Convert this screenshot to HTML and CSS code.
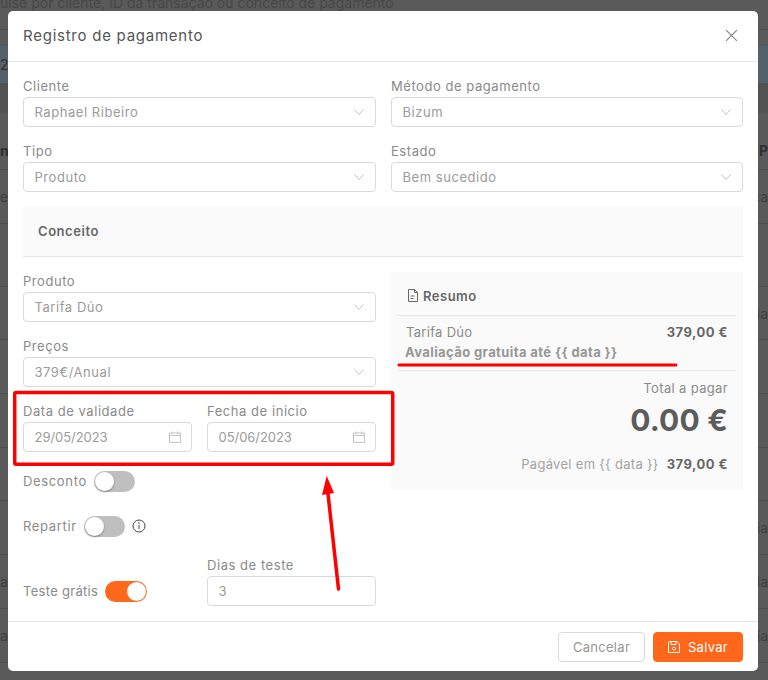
FILE: index.html
```html
<!DOCTYPE html>
<html lang="pt">
<head>
<meta charset="utf-8">
<title>Registro de pagamento</title>
<link rel="stylesheet" href="styles.css">
</head>
<body>
<svg width="0" height="0" class="defs">
  <symbol id="chev" viewBox="0 0 10 6"><path d="M.5.5 5 5.500 9.500.5" fill="none" stroke="currentColor"/></symbol>
  <symbol id="cal" viewBox="0 0 12 12"><path d="M.5 2h11v9.500H.5zM.5 4.500h11M3 .5V3M9 .5V3" fill="none" stroke="currentColor"/></symbol>
</svg>
<div class="backdrop">
  <div class="bg-search"><span>uise por cliente, ID da transação ou conceito de pagamento</span></div>
  <div class="bg-tabs"></div>
  <div class="bg-band"><span>2</span></div>
  <div class="bg-gap"></div>
  <div class="bg-head"><b>ne</b><b>P</b></div>
  <div class="bg-row"><span>ex</span><span>ca</span></div>
  <div class="bg-row tall"></div>
  <div class="bg-row"><span></span><span>cia</span></div>
  <div class="bg-row"></div>
  <div class="bg-row"></div>
  <div class="bg-row"></div>
  <div class="bg-row"><span></span><span>cia</span></div>
  <div class="bg-row"><span>ai</span><span>cia</span></div>
  <div class="bg-row"><span>ai</span><span>cia</span></div>
  <div class="bg-row"></div>
</div>

<section class="modal">
  <header class="modal-head">
    <h1>Registro de pagamento</h1>
    <svg class="close" viewBox="0 0 12 12"><path d="M1 1l10 10M11 1 1 11" fill="none" stroke="currentColor"/></svg>
  </header>
  <div class="modal-body">
    <div class="grid">
      <div class="field"><label>Cliente</label><div class="control">Raphael Ribeiro<svg class="chev"><use href="#chev"/></svg></div></div>
      <div class="field"><label>Método de pagamento</label><div class="control">Bizum<svg class="chev"><use href="#chev"/></svg></div></div>
      <div class="field"><label>Tipo</label><div class="control">Produto<svg class="chev"><use href="#chev"/></svg></div></div>
      <div class="field"><label>Estado</label><div class="control">Bem sucedido<svg class="chev"><use href="#chev"/></svg></div></div>
    </div>
    <div class="concept">Conceito</div>
    <div class="grid">
      <div class="col">
        <div class="field"><label>Produto</label><div class="control">Tarifa Dúo<svg class="chev"><use href="#chev"/></svg></div></div>
        <div class="field"><label>Preços</label><div class="control">379€/Anual<svg class="chev"><use href="#chev"/></svg></div></div>
        <div class="pair dates">
          <div class="field"><label>Data de validade</label><div class="control num">29/05/2023<svg class="calicon"><use href="#cal"/></svg></div></div>
          <div class="field"><label>Fecha de inicio</label><div class="control num">05/06/2023<svg class="calicon"><use href="#cal"/></svg></div></div>
        </div>
        <div class="switch-row"><span class="switch-label">Desconto</span><span class="toggle"></span></div>
        <div class="switch-row"><span class="switch-label">Repartir</span><span class="toggle"></span>
          <svg class="info" viewBox="0 0 14 14"><circle cx="7" cy="7" r="6" fill="none" stroke="currentColor"/><path d="M7 6v4.200" stroke="currentColor"/><circle cx="7" cy="4" r=".8" fill="currentColor"/></svg>
        </div>
        <div class="pair trial-pair">
          <div class="switch-row"><span class="switch-label tight">Teste grátis</span><span class="toggle on"></span></div>
          <div class="field last"><label>Dias de teste</label><div class="control num">3</div></div>
        </div>
      </div>
      <aside class="summary">
        <div class="summary-title">
          <svg viewBox="0 0 10 13"><path d="M.5.5h6l3 3v9H.5zM6.500.5v3h3M2.500 7h4M2.500 9.500h3" fill="none" stroke="currentColor"/></svg>
          Resumo
        </div>
        <div class="summary-item">
          <div class="line"><span>Tarifa Dúo</span><strong>379,00 €</strong></div>
          <div class="trial">Avaliação gratuita até {{ data }}</div>
        </div>
        <div class="summary-total">
          <div class="total-label">Total a pagar</div>
          <div class="total">0.00 €</div>
          <div class="payable"><span>Pagável em {{ data }}</span><strong>379,00 €</strong></div>
        </div>
      </aside>
    </div>
  </div>
  <footer class="modal-foot">
    <button class="btn">Cancelar</button>
    <button class="btn primary"><svg viewBox="0 0 12 12"><path d="M1 .5h8l2.500 2.500v8.500H.5V1zM3 .5v3h5v-3M6 6.200a1.500 1.500 0 1 0 .01 0" fill="none" stroke="currentColor"/></svg>Salvar</button>
  </footer>
</section>

<svg class="marks" viewBox="0 0 768 680">
  <rect x="14.700" y="392.500" width="378" height="71.700" rx="1.500" fill="none" stroke="#f00" stroke-width="3.500"/>
  <path d="M399 365H676" stroke="#f00" stroke-width="3" stroke-linecap="round"/>
  <path d="M338.500 589 328 494" stroke="#f00" stroke-width="3.500" stroke-linecap="round"/>
  <path d="M326.700 476 322 495 334 493z" fill="#f00"/>
</svg>
</body>
</html>
```
FILE: styles.css
```css
* { box-sizing: border-box; }
html, body { margin: 0; height: 100%; }
body {
  position: relative;
  width: 768px;
  height: 680px;
  overflow: hidden;
  background: #5a5a5a;
  font-family: Inter, "Noto Sans", sans-serif;
  font-size: 13px;
  color: #7d7d7d;
}
.defs { position: absolute; }

/* dimmed page behind the modal */
.backdrop { height: 680px; overflow: hidden; color: #3d3d3d; }
.bg-search { height: 30px; border-bottom: 1px solid #505050; overflow: hidden; font-size: 14px; line-height: 6px; color: #474747; }
.bg-tabs { height: 16px; }
.bg-band { height: 37px; background: #566069; border-top: 1px solid #4e6577; border-bottom: 1px solid #4e6577; line-height: 35px; font-size: 14px; color: #333; }
.bg-gap { height: 30px; background: #525252; }
.bg-head { height: 57px; padding-top: 29px; display: flex; justify-content: space-between; border-bottom: 1px solid #505050; font-size: 14px; color: #2f2f2f; }
.bg-row { height: 53.700px; display: flex; justify-content: space-between; align-items: center; border-bottom: 1px solid #505050; font-size: 14px; color: #3f3f3f; }
.bg-row.tall { height: 63px; }

.modal {
  position: absolute;
  left: 8px;
  top: 11px;
  width: 750px;
  height: 660px;
  display: flex;
  flex-direction: column;
  background: #fff;
  border-radius: 5px;
}
.modal-head { height: 51px; flex: none; display: flex; align-items: center; justify-content: space-between; padding: 0 20px 1px 15px; border-bottom: 1px solid #e6e6e6; }
.modal-head h1 { margin: 0; font-size: 15px; font-weight: 400; color: #555; letter-spacing: .75px; }
.close { width: 13px; height: 13px; color: #808080; }
.modal-body { flex: 1; padding: 15px 15px 0; }

.grid { display: grid; grid-template-columns: 353px 352px; column-gap: 15px; }
.pair { display: grid; grid-template-columns: 169px 169px; column-gap: 15px; }
.field { margin-bottom: 15px; }
.field label { display: block; height: 20px; line-height: 19.500px; white-space: nowrap; color: #8a8a8a; letter-spacing: .55px; }
.control { height: 30px; padding: 0 11px 0 10.500px; display: flex; align-items: center; justify-content: space-between; border: 1px solid #d9d9d9; border-radius: 4px; color: #9b9b9b; background: #fff; white-space: nowrap; letter-spacing: .55px; }
.control.num { letter-spacing: -.05px; }
.chev { width: 10px; height: 6px; color: #c0c0c0; }
.calicon { width: 12px; height: 12px; color: #c4c4c4; margin-right: -1px; }
.concept { height: 50px; margin-bottom: 15px; padding-left: 15px; line-height: 48px; background: #fafafa; border-bottom: 1px solid #e6e6e6; font-weight: 600; color: #666; letter-spacing: .55px; }

.dates .field { margin-bottom: 14px; }
.switch-row { height: 30px; margin-bottom: 15px; display: flex; align-items: center; gap: 7px; }
.switch-label { color: #8a8a8a; letter-spacing: .65px; white-space: nowrap; }
.switch-label.tight { letter-spacing: .3px; }
.toggle { position: relative; width: 41.500px; height: 21px; border-radius: 11px; background: #bfbfbf; }
.toggle::after { content: ""; position: absolute; left: 1px; top: 1px; width: 19px; height: 19px; border-radius: 50%; background: #fff; box-shadow: 0 1px 2px rgba(0,0,0,.35); }
.toggle.on { background: #ff671b; }
.toggle.on::after { left: 21.500px; box-shadow: none; }
.info { width: 14px; height: 14px; color: #444; margin-left: 0; }
.trial-pair { align-items: end; }
.trial-pair .switch-row { margin-bottom: 0; }
.last { margin-bottom: 0; }

.summary { height: 217px; padding: 0 7px; background: #fafafa; }
.summary-title { height: 44px; display: flex; align-items: center; gap: 5px; padding: 4px 0 0 10px; border-bottom: 1px solid #e8e8e8; font-weight: 600; color: #666; letter-spacing: .5px; }
.summary-title svg { width: 10px; height: 13px; color: #666; }
.summary-item { height: 55px; padding: 6px 8px 0; border-bottom: 1px solid #e8e8e8; }
.line { display: flex; justify-content: space-between; line-height: 20px; letter-spacing: .3px; color: #8a8a8a; }
.line strong { font-weight: 700; color: #666; letter-spacing: .5px; }
.trial { margin-left: -1px; line-height: 20px; font-weight: 700; color: #969696; letter-spacing: .4px; white-space: nowrap; }
.summary-total { padding: 7px 8px 0; text-align: right; }
.total-label { line-height: 20px; color: #8a8a8a; letter-spacing: .35px; }
.total { margin-top: 3px; font-size: 30px; line-height: 38px; font-weight: 700; color: #5c5c5c; letter-spacing: .2px; }
.payable { margin-top: 15px; display: flex; justify-content: flex-end; gap: 8px; line-height: 20px; color: #a3a3a3; letter-spacing: .3px; }
.payable strong { font-weight: 700; color: #666; letter-spacing: .5px; }

.modal-foot { height: 50px; flex: none; display: flex; justify-content: flex-end; gap: 8px; padding: 10px 15px 0; border-top: 1px solid #e6e6e6; }
.btn { height: 30px; width: 87px; display: flex; align-items: center; justify-content: center; gap: 8px; border: 1px solid #d9d9d9; border-radius: 4px; background: #fff; font: inherit; color: #969696; letter-spacing: .3px; }
.btn.primary { width: 90px; border-color: #ff671b; background: #ff671b; color: #fff; }
.btn svg { width: 12px; height: 12px; }

.marks { position: absolute; left: 0; top: 0; width: 768px; height: 680px; pointer-events: none; }
```
